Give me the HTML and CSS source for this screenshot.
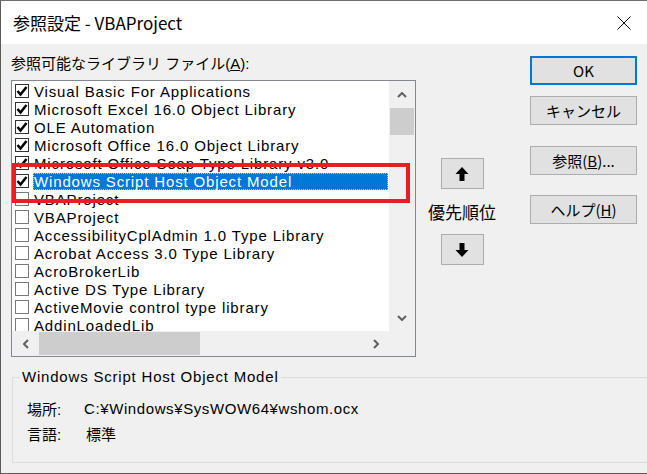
FILE: index.html
```html
<!DOCTYPE html>
<html lang="ja">
<head>
  <meta charset="UTF-8">
  <title>参照設定 - VBAProject</title>
  <link rel="stylesheet" href="styles.css">
</head>
<body>
  <div class="window">
    <div class="titlebar">
      <span class="title">参照設定 - VBAProject</span>
      <svg class="close" viewBox="0 0 14 14" width="14" height="14">
        <path d="M0.5 0.5 L13.5 13.5 M13.5 0.5 L0.5 13.5" stroke="#111" stroke-width="1" fill="none"/>
      </svg>
    </div>

    <div class="main">
      <div class="refs">
        <div class="caption">参照可能なライブラリ ファイル(<u>A</u>):</div>
        <div class="list">
          <div class="items">
            <div class="row"><span class="box checked"></span><span class="name">Visual Basic For Applications</span></div>
            <div class="row"><span class="box checked"></span><span class="name">Microsoft Excel 16.0 Object Library</span></div>
            <div class="row"><span class="box checked"></span><span class="name">OLE Automation</span></div>
            <div class="row"><span class="box checked"></span><span class="name">Microsoft Office 16.0 Object Library</span></div>
            <div class="row"><span class="box checked"></span><span class="name">Microsoft Office Soap Type Library v3.0</span></div>
            <div class="row selected"><span class="box checked"></span><span class="name">Windows Script Host Object Model</span></div>
            <div class="row"><span class="box"></span><span class="name">VBAProject</span></div>
            <div class="row"><span class="box"></span><span class="name">VBAProject</span></div>
            <div class="row"><span class="box"></span><span class="name">AccessibilityCplAdmin 1.0 Type Library</span></div>
            <div class="row"><span class="box"></span><span class="name">Acrobat Access 3.0 Type Library</span></div>
            <div class="row"><span class="box"></span><span class="name">AcroBrokerLib</span></div>
            <div class="row"><span class="box"></span><span class="name">Active DS Type Library</span></div>
            <div class="row"><span class="box"></span><span class="name">ActiveMovie control type library</span></div>
            <div class="row"><span class="box"></span><span class="name">AddinLoadedLib</span></div>
          </div>
          <div class="vscroll">
            <span class="arrow"><svg viewBox="0 0 10 6" width="10" height="6"><path d="M1 5 L5 1 L9 5" stroke="#606060" stroke-width="2" fill="none"/></svg></span>
            <span class="thumb"></span>
            <span class="track"></span>
            <span class="arrow"><svg viewBox="0 0 10 6" width="10" height="6"><path d="M1 1 L5 5 L9 1" stroke="#606060" stroke-width="2" fill="none"/></svg></span>
          </div>
          <div class="hscroll">
            <span class="arrow"><svg viewBox="0 0 6 10" width="6" height="10"><path d="M5 1 L1 5 L5 9" stroke="#606060" stroke-width="2" fill="none"/></svg></span>
            <span class="thumb"></span>
            <span class="track"></span>
            <span class="arrow"><svg viewBox="0 0 6 10" width="6" height="10"><path d="M1 1 L5 5 L1 9" stroke="#606060" stroke-width="2" fill="none"/></svg></span>
          </div>
          <div class="corner"></div>
          <div class="mark"></div>
        </div>
      </div>

      <div class="order">
        <button class="move">
          <svg viewBox="0 0 14 16" width="14" height="16"><path d="M7 1 L13.5 8 L9.5 8 L9.5 15 L4.5 15 L4.5 8 L0.5 8 Z" fill="#000"/></svg>
        </button>
        <div class="order-label">優先順位</div>
        <button class="move">
          <svg viewBox="0 0 14 16" width="14" height="16"><path d="M7 15 L13.5 8 L9.5 8 L9.5 1 L4.5 1 L4.5 8 L0.5 8 Z" fill="#000"/></svg>
        </button>
      </div>

      <div class="actions">
        <button class="btn default">OK</button>
        <button class="btn">キャンセル</button>
        <button class="btn gap">参照(<u>B</u>)...</button>
        <button class="btn gap">ヘルプ(<u>H</u>)</button>
      </div>
    </div>

    <fieldset class="info">
      <legend>Windows Script Host Object Model</legend>
      <div class="props">
        <span>場所:</span><span class="path">C:¥Windows¥SysWOW64¥wshom.ocx</span>
        <span>言語:</span><span>標準</span>
      </div>
    </fieldset>
  </div>
</body>
</html>
```

FILE: styles.css
```css
/* Dialog chrome */
body {
  margin: 0;
  background: #f0f0f0;
  font-family: "Liberation Sans", "Noto Sans CJK JP", sans-serif;
  font-size: 15px;
  color: #000;
}

.window {
  width: 647px;
  height: 474px;
  box-sizing: border-box;
  border-top: 1px solid #6e6e6e;
  border-left: 1px solid #5a5a5a;
  border-bottom: 1px solid #5a5a5a;
  background: #f0f0f0;
  overflow: hidden;
}

.titlebar {
  height: 43px;
  background: #fff;
  display: flex;
  align-items: center;
  justify-content: space-between;
  padding: 0 16px 0 12px;
}

.title {
  font-family: "Noto Sans CJK JP", sans-serif;
  font-size: 17px;
}

.close { margin-top: 1px; }

u { text-decoration: underline; text-underline-offset: 1px; }

/* --- Upper part: list + buttons --- */
.main {
  display: flex;
  padding-left: 10px;
  height: 313px;
}

.refs { width: 405px; }

.caption {
  margin-top: 10px;
  line-height: 20px;
  height: 20px;
}

.list {
  position: relative;
  margin-top: 6px;
  height: 277px;
  box-sizing: border-box;
  border: 1px solid #828790;
  background: #fff;
  display: grid;
  grid-template-columns: 377px 26px;
  grid-template-rows: 250px 25px;
}

.items {
  padding-top: 1px;
  overflow: hidden;
}

.row {
  display: flex;
  align-items: center;
  height: 18px;
  white-space: nowrap;
}

.box {
  width: 14px;
  height: 14px;
  box-sizing: border-box;
  border: 1px solid #7a7a7a;
  margin-left: 3px;
  margin-right: 4px;
  flex: none;
  background: #fff;
}

.box.checked {
  border-color: #333;
  background: #fff url("data:image/svg+xml,%3Csvg xmlns='http://www.w3.org/2000/svg' viewBox='0 0 12 12'%3E%3Cpath d='M1.5 6 L4.5 9.5 L10.5 2' stroke='%23000' stroke-width='2.6' fill='none'/%3E%3C/svg%3E") center / 12px 12px no-repeat;
}

.name {
  padding: 0 1px;
  line-height: 17px;
  letter-spacing: 0.85px;
}

.row.selected .name {
  flex: 1;
  background: #0078d7;
  color: #fff;
  outline: 1px dotted #e9c85e;
  outline-offset: -1px;
  margin-right: 1px;
}

/* scrollbars */
.vscroll {
  background: #f0f0f0;
  display: flex;
  flex-direction: column;
}

.hscroll {
  background: #f0f0f0;
  display: flex;
}

.arrow {
  flex: none;
  width: 26px;
  height: 27px;
  display: flex;
  align-items: center;
  justify-content: center;
}

.hscroll .arrow { width: 27px; height: 25px; }

.vscroll .thumb {
  height: 27px;
  margin: 0 1px;
  background: #cdcdcd;
}

.hscroll .thumb {
  width: 161px;
  margin: 1px 0;
  background: #cdcdcd;
}

.track { flex: 1; }

.corner { background: #f0f0f0; }

/* red frame drawn around the chosen library */
.mark {
  position: absolute;
  left: 0;
  top: 82px;
  width: 398px;
  height: 40px;
  box-sizing: border-box;
  border: 4px solid #ea1c24;
}

/* priority buttons */
.order {
  width: 72px;
  margin-left: 10px;
  display: flex;
  flex-direction: column;
  align-items: center;
  padding-top: 114px;
}

.move {
  width: 43px;
  height: 31px;
  background: #e1e1e1;
  border: 1px solid #adadad;
  padding: 0;
  display: flex;
  align-items: center;
  justify-content: center;
}

.order-label {
  font-family: "Noto Sans CJK JP", sans-serif;
  font-size: 17px;
  line-height: 20px;
  margin: 13px 0 12px;
}

.actions {
  width: 107px;
  margin-left: 32px;
  padding-top: 12px;
  display: flex;
  flex-direction: column;
}

.btn {
  height: 29px;
  margin-bottom: 11px;
  background: #e1e1e1;
  border: 1px solid #adadad;
  font-family: "Noto Sans CJK JP", sans-serif;
  font-size: 15px;
  padding: 0;
  color: #000;
}

.btn.default { border: 2px solid #0078d7; }
.btn.gap { margin-top: 10px; margin-bottom: 10px; }

/* --- Lower part: details of the selected library --- */
.info {
  margin: 10px -20px 0 11px;
  padding: 0 0 16px 7px;
  border: 1px solid #dcdcdc;
  height: 96px;
  box-sizing: border-box;
}

.info legend {
  padding: 0 2px;
  line-height: 20px;
  letter-spacing: 0.8px;
}

.props {
  display: grid;
  grid-template-columns: 59px auto;
  grid-auto-rows: 25px;
  align-items: center;
  padding: 9px 0 0 7px;
}

.path {
  margin-left: -2px;
  letter-spacing: 0.6px;
}
```
